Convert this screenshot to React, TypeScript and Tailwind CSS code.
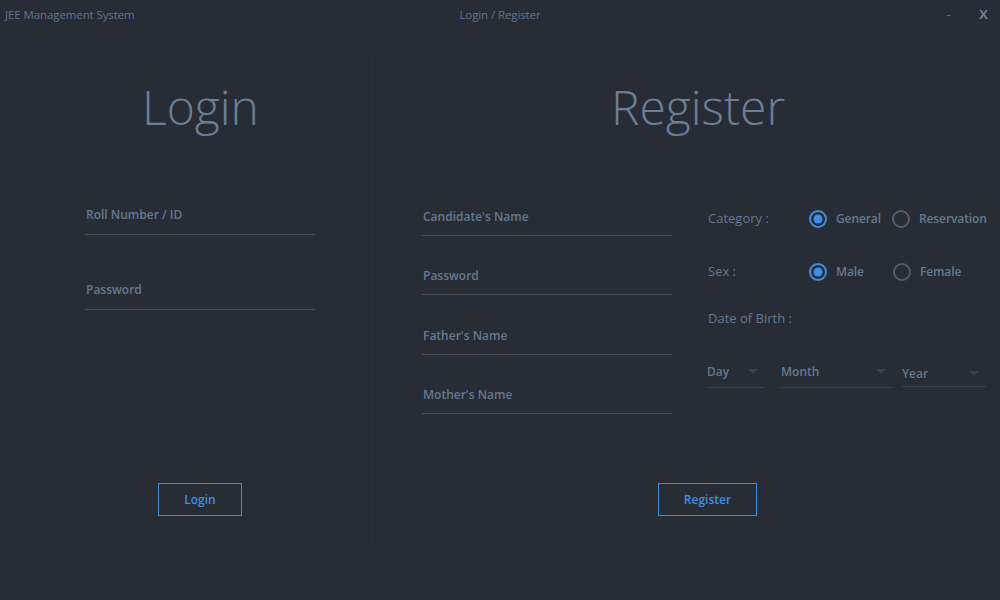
import React from "react";

const font = { fontFamily: '"Open Sans", "Noto Sans", sans-serif' };

function Field({ label, width, mt, gap }: { label: string; width: string; mt: string; gap: string }) {
  return (
    <div className={`${width} ${mt}`}>
      <div className="h-[16px] pl-[1px] text-[12px] leading-[16px] font-semibold text-[#647a93]">{label}</div>
      <div className={`${gap} h-px bg-[#4a4e55]`} />
    </div>
  );
}

function Radio({ checked, label }: { checked: boolean; label: string }) {
  return (
    <div className="flex items-center gap-[8px]">
      <svg width="20" height="20" viewBox="0 0 20 20">
        <circle cx="10" cy="10" r="8" fill="none" stroke={checked ? "#3d8fe5" : "#575b62"} strokeWidth="2" />
        {checked && <circle cx="10" cy="10" r="4.5" fill="#3d8fe5" />}
      </svg>
      <span className="text-[12px] font-semibold tracking-[-0.1px] text-[#647a93]">{label}</span>
    </div>
  );
}

function Drop({ label, width, ml, arrowPad, labelTop, gap }: { label: string; width: string; ml: string; arrowPad: string; labelTop: string; gap: string }) {
  return (
    <div className={`${width} ${ml}`}>
      <div className={`flex items-center justify-between h-[18px] ${labelTop}`}>
        <span className="text-[12px] font-semibold text-[#647a93]">{label}</span>
        <svg width="10" height="6" viewBox="0 0 10 6" className={arrowPad}>
          <path d="M0 0 L10 0 L5 5 Z" fill="#3b4048" />
        </svg>
      </div>
      <div className={`${gap} h-px bg-[#3b3f46]`} />
    </div>
  );
}

export default function App() {
  return (
    <div style={font} className="w-[1000px] h-[600px] bg-[#282c34] flex flex-col overflow-hidden">
      <div className="h-[30px] flex items-center relative">
        <span className="pl-[5px] text-[11.5px] tracking-[-0.1px] text-[#61748c]">JEE Management System</span>
        <span className="absolute left-0 right-0 text-center text-[11.5px] tracking-[-0.1px] text-[#61748c] pointer-events-none">Login / Register</span>
        <div className="ml-auto flex items-center">
          <span className="text-[12px] text-[#61748c] mr-[29px]">-</span>
          <span className="text-[13px] font-bold text-[#6f7f94] mr-[12px]">X</span>
        </div>
      </div>
      <div className="flex flex-1">
        <div className="w-[375px] flex flex-col">
          <div className="mt-[47px] text-center text-[48px] leading-[60px] font-light text-[#6b7f97] pl-[26px]">Login</div>
          <div className="ml-[85px] flex flex-col">
            <Field label="Roll Number / ID" width="w-[230px]" mt="mt-[70px]" gap="mt-[11px]" />
            <Field label="Password" width="w-[230px]" mt="mt-[47px]" gap="mt-[11px]" />
          </div>
          <div className="mt-[173px] ml-[158px] w-[84px] h-[33px] border border-[#3d8fe5] flex items-center justify-center text-[12px] font-semibold text-[#3d8fe5]">Login</div>
        </div>
        <div className="mt-[20px] mb-[52px] w-px bg-[#252930]" />
        <div className="flex-1 flex flex-col">
          <div className="mt-[47px] text-center text-[48px] leading-[60px] font-light text-[#6b7f97] pl-[20px]">Register</div>
          <div className="flex">
            <div className="ml-[46px] flex flex-col">
              <Field label="Candidate's Name" width="w-[250px]" mt="mt-[72px]" gap="mt-[10px]" />
              <Field label="Password" width="w-[250px]" mt="mt-[32px]" gap="mt-[10px]" />
              <Field label="Father's Name" width="w-[250px]" mt="mt-[33px]" gap="mt-[10px]" />
              <Field label="Mother's Name" width="w-[250px]" mt="mt-[32px]" gap="mt-[10px]" />
            </div>
            <div className="ml-[36px] flex flex-col">
              <div className="mt-[72px] flex items-center h-[20px]">
                <span className="w-[100px] text-[13px] text-[#647a93]">Category :</span>
                <Radio checked label="General" />
                <div className="ml-[10px]"><Radio checked={false} label="Reservation" /></div>
              </div>
              <div className="mt-[33px] flex items-center h-[20px]">
                <span className="w-[100px] text-[13px] text-[#647a93]">Sex :</span>
                <Radio checked label="Male" />
                <div className="ml-[28px]"><Radio checked={false} label="Female" /></div>
              </div>
              <div className="mt-[27px] h-[20px] flex items-center text-[13px] text-[#647a93]">Date of Birth :</div>
              <div className="mt-[34px] flex items-start">
                <Drop label="Day" width="w-[57px]" ml="ml-[-1px]" arrowPad="mr-[6px]" labelTop="" gap="mt-[6px]" />
                <Drop label="Month" width="w-[112px]" ml="ml-[17px]" arrowPad="mr-[7px]" labelTop="" gap="mt-[6px]" />
                <Drop label="Year" width="w-[84px]" ml="ml-[9px]" arrowPad="mr-[7px]" labelTop="mt-[2px]" gap="mt-[3px]" />
              </div>
            </div>
          </div>
          <div className="mt-[69px] ml-[282px] w-[99px] h-[33px] border border-[#3d8fe5] flex items-center justify-center text-[12px] font-semibold text-[#3d8fe5]">Register</div>
        </div>
      </div>
    </div>
  );
}
